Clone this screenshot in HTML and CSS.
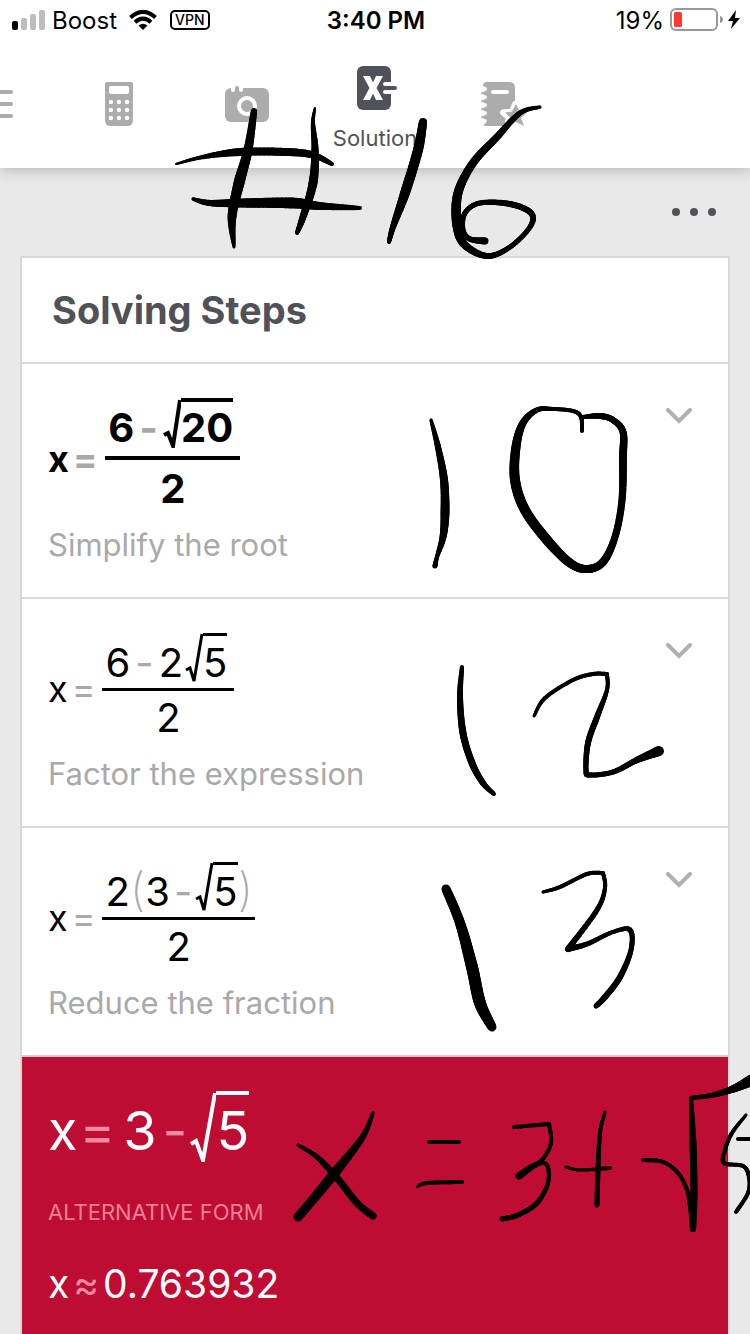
FILE: index.html
```html
<!DOCTYPE html>
<html lang="en">
<head>
<meta charset="utf-8">
<meta name="viewport" content="width=device-width, initial-scale=1">
<title>Solving Steps</title>
<link rel="stylesheet" href="styles.css">
</head>
<body>
<div class="page">
  <header class="top">
    <div class="status">
      <div class="status-side">
        <svg class="signal" viewBox="0 0 33 20" aria-hidden="true"><rect x="0" y="11" width="6" height="9" rx="2"/><g class="signal-off"><rect x="9" y="8" width="6" height="12" rx="2"/><rect x="18" y="4" width="6" height="16" rx="2"/><rect x="27" y="0" width="6" height="20" rx="2"/></g></svg>
        <span class="carrier">Boost</span>
        <svg class="wifi" viewBox="0 0 28 20" aria-hidden="true"><g fill="none" stroke="#000" stroke-width="4"><path d="M1.500 7.500Q14-3.800 26.500 7.500"/><path d="M6 12.200Q14 5 22 12.200"/></g><path d="M14 20l-4.500-4.500q4.500-3.600 9 0z"/></svg>
        <span class="vpn">VPN</span>
      </div>
      <time class="clock">3:40 PM</time>
      <div class="status-side status-right">
        <span class="percent">19%</span>
        <svg class="battery" viewBox="0 0 53 24" aria-hidden="true"><rect x="1" y="1" width="46" height="21" rx="5" fill="none" stroke="#999" stroke-width="2"/><rect x="4" y="4" width="8" height="15" rx="1.500" fill="#ff3b30"/><path d="M50 8q3 1 3 3.500T50 15z" fill="#999"/></svg>
        <svg class="bolt" viewBox="0 0 12 20" aria-hidden="true"><path d="M8 0L0 11h5L3 19 12 8H7z"/></svg>
      </div>
    </div>
    <nav class="tabs">
      <button class="tab" type="button" aria-label="Menu"><svg viewBox="0 0 44 44"><g stroke="currentColor" stroke-width="4" stroke-linecap="round"><path d="M2 10h40M2 22h40M2 34h40"/></g></svg></button>
      <button class="tab" type="button" aria-label="Calculator"><svg viewBox="0 0 44 44"><path fill="currentColor" d="M10 0h24q2 0 2 2v36q0 6-6 6H14q-6 0-6-6V2q0-2 2-2z"/><rect x="12" y="4" width="20" height="8" rx="2" fill="#fff"/><g fill="#fff"><circle cx="14" cy="20" r="2.200"/><circle cx="22" cy="20" r="2.200"/><circle cx="30" cy="20" r="2.200"/><circle cx="14" cy="28" r="2.200"/><circle cx="22" cy="28" r="2.200"/><circle cx="30" cy="28" r="2.200"/><circle cx="14" cy="36" r="2.200"/><circle cx="22" cy="36" r="2.200"/><circle cx="30" cy="36" r="2.200"/></g></svg></button>
      <button class="tab" type="button" aria-label="Camera"><svg viewBox="0 0 44 44"><rect y="6" width="44" height="34" rx="6" fill="currentColor"/><path d="M8 4v4M16 4v4" stroke="#fff" stroke-width="4" stroke-linecap="round"/><path d="M12 6v4" stroke="currentColor" stroke-width="4" stroke-linecap="round"/><circle cx="22" cy="24" r="8" fill="none" stroke="#fff" stroke-width="4"/></svg></button>
      <button class="tab tab-active" type="button"><svg viewBox="0 0 44 44"><rect x="4" width="34" height="44" rx="6" fill="currentColor"/><path d="M10 10h7l3 6.500 3-6.500h7l-6.500 12L30 34h-7l-3-6.500-3 6.500h-7l6.500-12z" fill="#fff"/><path d="M32 18h8M32 26h8" stroke="#fff" stroke-width="4" stroke-linecap="round"/><path d="M30 22h12" stroke="currentColor" stroke-width="4" stroke-linecap="round"/></svg><span>Solution</span></button>
      <button class="tab" type="button" aria-label="Notebook"><svg viewBox="0 0 44 44"><path fill="currentColor" d="M6 0h22q6 0 6 6v38H4q-1 0-1-2 3-1 3-3t-6-3q0-2 2-2 4-1 4-3t-6-3q0-2 2-2 4-1 4-3t-6-3q0-2 2-2 4-1 4-3t-6-3q0-2 2-2 4-1 4-3T2 4q0-4 4-4z"/><path d="M12 10h14" stroke="#fff" stroke-width="4" stroke-linecap="round"/><path d="M34 22l3.500 7.500 7.500 1-6 5.500 3 8-8-4-8 4 2-8-6-5.500 9-1z" fill="currentColor" stroke="#fff" stroke-width="6" stroke-linejoin="round"/><path d="M35 22l3.500 7.500 7.500 1-6 5.500 3 8-8-4-6 3 1-7-6-5.500 7-1z" fill="currentColor"/></svg></button>
    </nav>
  </header>

  <main class="content">
    <div class="actions">
      <button class="more" type="button" aria-label="More options"><svg viewBox="0 0 44 8"><circle cx="4" cy="4" r="4"/><circle cx="22" cy="4" r="4"/><circle cx="40" cy="4" r="4"/></svg></button>
    </div>
    <section class="card">
      <h1 class="title">Solving Steps</h1>

      <article class="step step-strong">
        <div class="formula">
          <span class="lhs">x</span><span class="lhs op">=</span>
          <span class="fraction">
            <span class="numerator"><span>6</span><span class="op minus">-</span><span class="radical"><svg viewBox="0 0 18 50"><path d="M1 37l4-2 5 13L17 2"/></svg><span class="radicand">20</span></span></span>
            <span class="denominator">2</span>
          </span>
        </div>
        <p class="caption">Simplify the root</p>
        <button class="expand" type="button" aria-label="Show step details"><svg viewBox="0 0 26 16"><path d="M2 2l11 11L24 2"/></svg></button>
      </article>

      <article class="step">
        <div class="formula">
          <span class="lhs">x</span><span class="lhs op">=</span>
          <span class="fraction">
            <span class="numerator"><span>6</span><span class="op minus">-</span><span>2</span><span class="radical"><svg viewBox="0 0 18 50"><path d="M1 37l4-2 4 13L17 1"/></svg><span class="radicand">5</span></span></span>
            <span class="denominator">2</span>
          </span>
        </div>
        <p class="caption">Factor the expression</p>
        <button class="expand" type="button" aria-label="Show step details"><svg viewBox="0 0 26 16"><path d="M2 2l11 11L24 2"/></svg></button>
      </article>

      <article class="step">
        <div class="formula">
          <span class="lhs">x</span><span class="lhs op">=</span>
          <span class="fraction">
            <span class="numerator numerator-closed"><span>2</span><span class="paren">(</span><span>3</span><span class="op minus">-</span><span class="radical"><svg viewBox="0 0 18 50"><path d="M1 37l4-2 4 13L17 1"/></svg><span class="radicand">5</span></span><span class="paren">)</span></span>
            <span class="denominator">2</span>
          </span>
        </div>
        <p class="caption">Reduce the fraction</p>
        <button class="expand" type="button" aria-label="Show step details"><svg viewBox="0 0 26 16"><path d="M2 2l11 11L24 2"/></svg></button>
      </article>

      <section class="result">
        <div class="answer"><span>x</span><span class="op">=</span><span>3</span><span class="op answer-minus">-</span><span class="radical"><svg viewBox="0 0 26 71"><path d="M1 53l5-3 7 19L25 2"/></svg><span class="radicand">5</span></span></div>
        <h2 class="alt">ALTERNATIVE FORM</h2>
        <div class="approx"><span>x</span><span class="op">≈</span><span>0.763932</span></div>
      </section>
    </section>
  </main>
  <svg class="ink" id="ink" viewBox="0 0 750 1334" preserveAspectRatio="xMidYMin slice" aria-hidden="true"></svg>
</div>
<script src="ink.js"></script>
</body>
</html>
```
FILE: styles.css
```css
* { box-sizing: border-box; }

body {
  margin: 0;
  background: #e9e9e9;
  color: #000;
  font-family: Inter, "Liberation Sans", sans-serif;
}

button {
  margin: 0;
  padding: 0;
  border: 0;
  background: none;
  font: inherit;
}

svg { display: block; flex: none; }

.page {
  position: relative;
  display: flex;
  flex-direction: column;
  min-height: 100vh;
  overflow: hidden;
}

.top {
  background: #fff;
  box-shadow: 0 4px 12px rgba(0, 0, 0, 0.18);
}

/* Status bar */
.status {
  display: grid;
  grid-template-columns: 1fr auto 1fr;
  align-items: center;
  height: 40px;
  padding: 0 10px 0 12px;
  font-size: 24px;
}
.status-side { display: flex; align-items: center; }
.status-right { justify-content: flex-end; }
.signal { width: 33px; height: 20px; }
.signal-off { fill: #bdbdbd; }
.carrier { margin-left: 7px; }
.wifi { width: 28px; height: 20px; margin-left: 12px; }
.vpn {
  margin-left: 13px;
  padding: 0 3px;
  border: 2px solid #000;
  border-radius: 5px;
  font-size: 14px;
  font-weight: 500;
  line-height: 16px;
}
.clock { font-weight: 600; }
.battery { width: 53px; height: 24px; margin-left: 6px; }
.bolt { width: 12px; height: 20px; margin-left: 5px; }

/* Tab strip */
.tabs {
  display: grid;
  grid-template-columns: repeat(7, 128px);
  justify-content: center;
  height: 128px;
}
.tab {
  display: flex;
  flex-direction: column;
  align-items: center;
  justify-content: center;
  gap: 14px;
  color: #acacac;
  font-size: 22px;
  line-height: 28px;
}
.tab svg { width: 44px; height: 44px; overflow: visible; }
.tab-active { padding-top: 10px; color: #505258; }

.content {
  display: flex;
  flex: 1;
  flex-direction: column;
  padding: 0 20px;
}
.actions {
  display: flex;
  align-items: center;
  justify-content: flex-end;
  height: 88px;
  padding-right: 14px;
}
.more svg { width: 44px; height: 8px; fill: #505258; }

.card {
  display: flex;
  flex: 1;
  flex-direction: column;
  border: 2px solid #d8d8d8;
  border-bottom: 0;
  background: #fff;
}
.title {
  margin: 0;
  padding: 28px 30px;
  border-bottom: 2px solid #d8d8d8;
  color: #505258;
  font-size: 38px;
  font-weight: 700;
  line-height: 48px;
}

/* Steps */
.step {
  display: grid;
  grid-template-columns: 1fr auto;
  row-gap: 16px;
  padding: 34px 36px 32px 26px;
  border-bottom: 2px solid #d8d8d8;
}
.step:nth-of-type(3) { border-bottom-color: #e6c9d0; }
.formula {
  display: flex;
  align-items: flex-end;
  font-size: 40px;
  line-height: 40px;
}
.lhs { margin-bottom: 29px; font-size: 36px; }
.op { color: #a9a9a9; }
.lhs.op { margin: 0 7px 29px 4px; }
.fraction { display: flex; flex-direction: column; }
.numerator {
  display: flex;
  align-items: flex-end;
  padding: 0 7px 5px 3px;
  border-bottom: 3px solid #000;
}
.denominator { padding-top: 7px; text-align: center; }
.minus { margin: 0 5px; }
.radical { display: flex; }
.radical svg {
  width: 18px;
  height: 50px;
  fill: none;
  stroke: currentColor;
  stroke-width: 3;
}
.radicand {
  padding-top: 7px;
  border-top: 3px solid currentColor;
}
.step:nth-of-type(2) .radical { margin-left: 2px; }
.numerator-closed { padding-right: 2px; }
.numerator-closed .minus { margin: 0 3px 0 4px; }
.paren {
  align-self: flex-end;
  color: #a9a9a9;
  font-size: 46px;
  font-weight: 200;
  line-height: 46px;
}
.step-strong .formula { font-weight: 700; }
.step-strong .lhs { margin-bottom: 30px; }
.step-strong .lhs.op { margin-right: 8px; }
.step-strong .numerator { padding-bottom: 8px; border-bottom-width: 4px; }
.step-strong .denominator { padding-top: 9px; }
.step-strong .radical svg { stroke-width: 4; }
.step-strong .radicand { padding-top: 6px; border-top-width: 4px; }
.caption {
  grid-column: 1;
  margin: 0;
  color: #a9a9a9;
  font-size: 31px;
  line-height: 40px;
}
.expand {
  grid-row: 1;
  grid-column: 2;
  align-self: start;
  padding-top: 10px;
}
.expand svg {
  width: 26px;
  height: 16px;
  fill: none;
  stroke: #b0b0b0;
  stroke-width: 4;
  stroke-linecap: round;
}

/* Result */
.result {
  flex: 1;
  padding: 34px 26px 28px;
  background: #be0c33;
  color: #fff;
}
.result .op { color: #ef8ba0; }
.answer {
  display: flex;
  align-items: flex-start;
  font-size: 54px;
  line-height: 80px;
}
.answer > .op { margin: 0 8px 0 2px; }
.answer > .answer-minus { margin: 0 3px 0 6px; }
.answer .radical svg { width: 26px; height: 71px; stroke-width: 4; }
.answer .radicand { height: 71px; padding-top: 0; border-top-width: 4px; line-height: 72px; }
.alt {
  margin: 25px 0 0;
  color: #ea8095;
  font-size: 22px;
  font-weight: 400;
  line-height: 32px;
}
.approx {
  display: flex;
  margin-top: 36px;
  font-size: 39px;
  line-height: 40px;
}
.approx .op { margin: 0 4px; }

/* Handwriting layer above the page */
.ink {
  position: absolute;
  inset: 0;
  width: 100%;
  height: 100%;
  pointer-events: none;
}
```
FILE: ink.js
```js
// Freehand strokes: each point is x, y and pen width. A repeated point is a sharp corner.
const strokes = [
  [[254,111,6],[248,150,9],[239,183,11],[232,217,9],[234,247,3]],
  [[315,108,2],[313,123,4],[315,150,7],[313,183,9],[303,217,7],[297,233,4]],
  [[176,164,2],[203,157,4],[240,152,8],[287,152,8],[313,155,7],[332,164,4]],
  [[193,199,3],[210,203,6],[243,203,9],[293,203,11],[320,206,8],[360,208,4]],
  [[423,122,8],[418,150,10],[405,193,10],[393,227,6],[389,242,4]],
  [[540,107,3],[520,113,5],[497,137,7],[473,163,8],[458,193,9],[457,223,10],[464,244,8],[487,256,6],[510,247,5],[530,227,5],[531,213,6],[510,204,6],[480,203,5],[465,213,5],[463,230,5],[470,239,5],[485,241,7]],
  [[431,420,3],[438,447,6],[444,480,8],[445,513,9],[443,537,7],[437,557,4],[435,566,5]],
  [[582,431,4],[581,417,4],[573,411,4],[553,409,4],[537,410,5],[523,423,7],[516,447,9],[515,480,10],[525,510,10],[547,540,10],[570,563,9],[587,569,8],[603,562,8],[615,537,7],[622,500,7],[623,457,8],[623,432,7],[613,420,6],[600,416,6],[583,417,4]],
  [[462,667,4],[460,697,6],[463,733,7],[472,763,7],[483,783,6],[494,794,4]],
  [[534,716,3],[545,698,4],[573,680,4],[593,674,4],[607,674,4],[607,674,4],[607,690,4],[597,717,6],[588,743,6],[586,770,5],[590,775,5],[613,772,5],[637,760,6],[659,751,10]],
  [[446,889,9],[460,923,10],[472,967,12],[480,1003,12],[492,1027,9]],
  [[543,892,3],[560,887,4],[587,874,4],[603,873,4],[603,873,4],[605,888,4],[597,910,5],[568,949,6],[568,949,6],[587,944,5],[613,932,4],[630,930,5],[631,950,5],[620,977,6],[605,997,6],[596,1006,5]],
  [[373,1113,3],[362,1138,6],[333,1175,10],[310,1203,9],[298,1217,9]],
  [[298,1145,3],[317,1157,5],[337,1178,7],[357,1203,7],[373,1216,7]],
  [[429,1142,4],[459,1142,4]],
  [[417,1187,2],[427,1183,4],[462,1182,4]],
  [[514,1127,4],[549,1124,4],[549,1124,4],[551,1143,4],[542,1160,4],[530,1168,6],[519,1176,7],[519,1176,7],[537,1165,3],[547,1165,4],[548,1183,4],[537,1203,5],[518,1215,5],[502,1219,5]],
  [[605,1112,3],[600,1133,4],[598,1170,5],[597,1205,5]],
  [[566,1167,3],[580,1170,3],[610,1168,4]],
  [[643,1160,4],[663,1162,4],[678,1173,4],[687,1190,4],[691,1210,5],[693,1229,6],[693,1229,6],[694,1193,7],[693,1143,7],[691,1098,4],[691,1098,4],[713,1095,5],[733,1089,7],[750,1081,11],[760,1076,12]],
  [[746,1115,3],[732,1133,4],[725,1150,4],[724,1163,4],[743,1166,4],[749,1177,4],[748,1193,4],[736,1212,4]],
  [[738,1139,4],[756,1139,4]]
];

const layer = document.getElementById("ink");
const STEPS = 12;

function spline(a, b, c, d, t) {
  return 0.5 * (2 * b + (c - a) * t + (2 * a - 5 * b + 4 * c - d) * t * t + (3 * b - a - 3 * c + d) * t * t * t);
}

for (const points of strokes) {
  const group = document.createElementNS(layer.namespaceURI, "g");
  group.setAttribute("stroke", "#000");
  group.setAttribute("stroke-linecap", "round");
  let last = points[0];
  for (let i = 0; i < points.length - 1; i++) {
    const a = points[Math.max(i - 1, 0)];
    const b = points[i];
    const c = points[i + 1];
    const d = points[Math.min(i + 2, points.length - 1)];
    if (b[0] === c[0] && b[1] === c[1]) continue;
    for (let s = 1; s <= STEPS; s++) {
      const t = s / STEPS;
      const next = [spline(a[0], b[0], c[0], d[0], t), spline(a[1], b[1], c[1], d[1], t), b[2] + (c[2] - b[2]) * t];
      const line = document.createElementNS(layer.namespaceURI, "line");
      line.setAttribute("x1", last[0]);
      line.setAttribute("y1", last[1]);
      line.setAttribute("x2", next[0]);
      line.setAttribute("y2", next[1]);
      line.setAttribute("stroke-width", next[2]);
      group.appendChild(line);
      last = next;
    }
  }
  layer.appendChild(group);
}
```
